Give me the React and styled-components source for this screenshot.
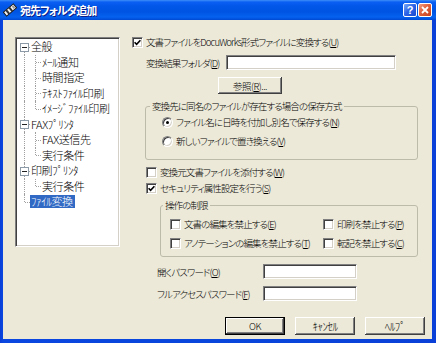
import React from "react"
import styled, { createGlobalStyle } from "styled-components"

const UI_FONT = `"Noto Sans CJK JP", "Noto Sans", "Liberation Sans", sans-serif`

const GlobalStyle = createGlobalStyle`
  html, body {
    margin: 0;
    padding: 0;
    background: #ffffff;
  }
  body {
    font-family: ${UI_FONT};
    font-feature-settings: "palt";
  }
  * {
    box-sizing: border-box;
  }
`;

const Window = styled.div`
    width: 436px;
    height: 343px;
    display: flex;
    flex-direction: column;
    background: linear-gradient(90deg, #0a3fd6 0, #0a46e0 3px, #0846dc 50%, #0a40d8 100%);
    overflow: hidden;
`;

const TitleBar = styled.div`
    height: 20px;
    flex: none;
    display: flex;
    align-items: center;
    padding: 0 4px 0 3px;
    background: linear-gradient(180deg, #3d8ef7 0, #0b60f3 2px, #0256e8 6px, #0054e3 12px, #0662f0 17px, #0049d2 20px);
`;

const TitleIcon = styled.svg`
    flex: none;
    margin-right: 3px;
`;

const TitleText = styled.span`
    flex: 1;
    color: #ffffff;
    font-weight: bold;
    font-size: 11px;
    letter-spacing: -1px;
    line-height: 13px;
    text-shadow: 1px 1px 0 #0b1f8a;
    white-space: nowrap;
`;

const CaptionButton = styled.span`
    width: 14px;
    height: 14px;
    margin-left: 1px;
    display: flex;
    align-items: center;
    justify-content: center;
    border: 1px solid #ffffff;
    border-radius: 2px;
    color: #ffffff;
    font-family: "Liberation Sans", sans-serif;
    font-weight: bold;
    font-size: 11px;
    line-height: 12px;
    background: ${p => p.$close
        ? "linear-gradient(135deg, #f0a086 0%, #e0603c 45%, #c8401c 100%)"
        : "linear-gradient(135deg, #7aa8f8 0%, #2c62e6 50%, #1a48d0 100%)"};
`;

const Client = styled.div`
    flex: 1;
    margin: 0 4px 4px 3px;
    background: #ece9d8;
    display: grid;
    grid-template-columns: 105px 1fr;
    column-gap: 12px;
    align-items: start;
    padding: 16px 0 0 12px;
`;

const Tree = styled.div`
    margin-top: 1px;
    height: 210px;
    background: #ffffff;
    border: 1px solid;
    border-color: #808080 #ffffff #ffffff #808080;
    box-shadow: inset 1px 1px #404040, inset -1px -1px #d4d0c8;
    padding: 1px 0 0 3px;
`;

const TreeRow = styled.div`
    display: flex;
    height: 15.5px;
`;

const Gutter = styled.span`
    position: relative;
    flex: none;
    width: 11px;
    &::before {
        content: "";
        position: absolute;
        left: 5px;
        top: ${p => p.$v === "bottom" ? "50%" : "0"};
        bottom: ${p => p.$v === "top" ? "50%" : "0"};
        border-left: 1px dotted #a0a0a0;
    }
    &::after {
        content: "";
        position: absolute;
        left: 6px;
        right: 0;
        top: 50%;
        border-top: 1px dotted #a0a0a0;
        display: ${p => p.$h ? "block" : "none"};
    }
`;

const Expander = styled.span`
    position: absolute;
    z-index: 1;
    left: 1px;
    top: calc(50% - 4px);
    width: 9px;
    height: 9px;
    border: 1px solid #8c9aa8;
    background: #ffffff;
    &::before {
        content: "";
        position: absolute;
        left: 1px;
        top: 3px;
        width: 5px;
        height: 1px;
        background: #222222;
    }
`;

const TreeLabel = styled.span`
    align-self: center;
    height: 13px;
    line-height: 13px;
    padding: 0 2px 0 1px;
    font-size: 11px;
    font-weight: 300;
    letter-spacing: -0.4px;
    white-space: nowrap;
    background: ${p => p.$selected ? "#316ac5" : "transparent"};
    color: ${p => p.$selected ? "#ffffff" : "#000000"};
`;

const Panel = styled.div`
    display: flex;
    flex-direction: column;
    align-items: flex-start;
    font-size: 9.5px;
    font-weight: 300;
    letter-spacing: -0.9px;
    color: #000000;
`;

const CheckRow = styled.label`
    display: flex;
    align-items: center;
    gap: 3px;
    height: 13px;
    line-height: 13px;
    margin: ${p => p.$top || 0}px 0 0 ${p => p.$indent || 0}px;
    white-space: nowrap;
`;

const Box = styled.span`
    flex: none;
    width: 11px;
    height: 11px;
    display: flex;
    align-items: center;
    justify-content: center;
    background: #ffffff;
    border: 1px solid;
    border-color: #808080 #ffffff #ffffff #808080;
    box-shadow: inset 1px 1px #404040, inset -1px -1px #d4d0c8;
`;

const RadioDot = styled.span`
    flex: none;
    width: 11px;
    height: 11px;
    border-radius: 50%;
    display: flex;
    align-items: center;
    justify-content: center;
    background: #ffffff;
    border: 1px solid;
    border-color: #808080 #ffffff #ffffff #808080;
    box-shadow: inset 1px 1px #404040, inset -1px -1px #d4d0c8;
    &::after {
        content: "";
        width: 3px;
        height: 3px;
        border-radius: 50%;
        background: #000000;
        display: ${p => p.$on ? "block" : "none"};
    }
`;

const FieldRow = styled.div`
    display: flex;
    align-items: center;
    height: 15px;
    margin: ${p => p.$top || 0}px 0 0 ${p => p.$indent || 0}px;
    white-space: nowrap;
`;

const FieldLabel = styled.span`
    flex: none;
    width: ${p => p.$w}px;
`;

const TextBox = styled.div`
    flex: none;
    width: ${p => p.$w}px;
    height: 15px;
    background: #ffffff;
    border: 1px solid;
    border-color: #808080 #ffffff #ffffff #808080;
    box-shadow: inset 1px 1px #404040, inset -1px -1px #d4d0c8;
`;

const Button = styled.button`
    width: ${p => p.$w}px;
    height: ${p => p.$h}px;
    margin: ${p => p.$top || 0}px 0 0 ${p => p.$indent || 0}px;
    padding: 0;
    font-family: ${UI_FONT};
    font-size: ${p => p.$size || 9.5}px;
    font-weight: 300;
    letter-spacing: -0.5px;
    color: #000000;
    background: #ece9d8;
    border: ${p => p.$default ? "1px solid #000000" : "none"};
    box-shadow: inset -1px -1px #404040, inset 1px 1px #ffffff, inset -2px -2px #808080;
`;

const ButtonRow = styled.div`
    display: flex;
    gap: 10px;
    margin: 16px 0 0 93px;
`;

const Group = styled.fieldset`
    margin: ${p => p.$top}px 0 0 ${p => p.$indent}px;
    width: ${p => p.$w}px;
    height: ${p => p.$h}px;
    min-width: 0;
    padding: 0;
    border: 1px solid #bcbaa9;
    border-radius: 3px;
`;

const GroupTitle = styled.legend`
    margin-left: ${p => p.$offset}px;
    padding: 0 2px;
    height: 13px;
    line-height: 13px;
    white-space: nowrap;
`;

const RadioList = styled.div`
    display: flex;
    flex-direction: column;
    gap: 6px;
    padding: 3px 0 0 16px;
`;

const CheckGrid = styled.div`
    display: grid;
    grid-template-columns: 153px auto;
    row-gap: 6px;
    padding: 6px 0 0 9px;
`;

const Key = ({ k }) => <>(<u>{k}</u>)</>

const Check = ({ checked }) => (
    <Box>
        {checked && (
            <svg width="7" height="7" viewBox="0 0 7 7">
                <path d="M0.6 3.2 L2.6 5.3 L6.4 1.2" fill="none" stroke="#000" strokeWidth="1.6" />
            </svg>
        )}
    </Box>
)

const treeRows = [
    { label: "全般", cells: [{ v: "bottom", h: true, exp: true }] },
    { label: "ﾒｰﾙ通知", cells: [{ v: "full" }, { v: "full", h: true }] },
    { label: "時間指定", cells: [{ v: "full" }, { v: "full", h: true }] },
    { label: "ﾃｷｽﾄﾌｧｲﾙ印刷", cells: [{ v: "full" }, { v: "full", h: true }] },
    { label: "ｲﾒｰｼﾞﾌｧｲﾙ印刷", cells: [{ v: "full" }, { v: "top", h: true }] },
    { label: "FAXﾌﾟﾘﾝﾀ", cells: [{ v: "full", h: true, exp: true }] },
    { label: "FAX送信先", cells: [{ v: "full" }, { v: "full", h: true }] },
    { label: "実行条件", cells: [{ v: "full" }, { v: "top", h: true }] },
    { label: "印刷ﾌﾟﾘﾝﾀ", cells: [{ v: "full", h: true, exp: true }] },
    { label: "実行条件", cells: [{ v: "full" }, { v: "top", h: true }] },
    { label: "ﾌｧｲﾙ変換", cells: [{ v: "top", h: true }], selected: true },
]

function App() {
    return (
        <>
            <GlobalStyle />
            <Window>
                <TitleBar>
                    <TitleIcon width="14" height="14" viewBox="0 0 14 14">
                        <g transform="rotate(-40 7 7)">
                            <rect x="0.5" y="4.5" width="13" height="5" fill="#f4f4f4" stroke="#1a1a1a" strokeWidth="1" />
                            <rect x="3" y="4.5" width="2" height="5" fill="#333" />
                            <rect x="7" y="4.5" width="2" height="5" fill="#333" />
                            <rect x="10.5" y="5.5" width="2" height="3" fill="#999" />
                        </g>
                    </TitleIcon>
                    <TitleText>宛先フォルダ追加</TitleText>
                    <CaptionButton>?</CaptionButton>
                    <CaptionButton $close>
                        <svg width="8" height="8" viewBox="0 0 8 8">
                            <path d="M1 1 L7 7 M7 1 L1 7" stroke="#fff" strokeWidth="1.8" />
                        </svg>
                    </CaptionButton>
                </TitleBar>

                <Client>
                    <Tree>
                        {treeRows.map((row, i) => (
                            <TreeRow key={i}>
                                {row.cells.map((c, j) => (
                                    <Gutter key={j} $v={c.v} $h={c.h}>
                                        {c.exp && <Expander />}
                                    </Gutter>
                                ))}
                                <TreeLabel $selected={row.selected}>{row.label}</TreeLabel>
                            </TreeRow>
                        ))}
                    </Tree>

                    <Panel>
                        <CheckRow>
                            <Check checked />
                            <span>文書ファイルをDocuWorks形式ファイルに変換する<Key k="U" /></span>
                        </CheckRow>

                        <FieldRow $top={6} $indent={14}>
                            <FieldLabel $w={80}>変換結果フォルダ<Key k="D" /></FieldLabel>
                            <TextBox $w={170} />
                        </FieldRow>

                        <Button $w={64} $h={17} $top={7} $indent={86}>参照<Key k="R" />...</Button>

                        <Group $top={6} $indent={13} $w={273} $h={60}>
                            <GroupTitle $offset={4}>変換先に同名のファイルが存在する場合の保存方式</GroupTitle>
                            <RadioList>
                                <CheckRow>
                                    <RadioDot $on />
                                    <span>ファイル名に日時を付加し別名で保存する<Key k="N" /></span>
                                </CheckRow>
                                <CheckRow>
                                    <RadioDot />
                                    <span>新しいファイルで置き換える<Key k="V" /></span>
                                </CheckRow>
                            </RadioList>
                        </Group>

                        <CheckRow $top={6} $indent={14}>
                            <Check />
                            <span>変換元文書ファイルを添付する<Key k="W" /></span>
                        </CheckRow>
                        <CheckRow $top={3} $indent={14}>
                            <Check checked />
                            <span>セキュリティ属性設定を行う<Key k="S" /></span>
                        </CheckRow>

                        <Group $top={4} $indent={28} $w={258} $h={58}>
                            <GroupTitle $offset={2}>操作の制限</GroupTitle>
                            <CheckGrid>
                                <CheckRow>
                                    <Check />
                                    <span>文書の編集を禁止する<Key k="E" /></span>
                                </CheckRow>
                                <CheckRow>
                                    <Check />
                                    <span>印刷を禁止する<Key k="P" /></span>
                                </CheckRow>
                                <CheckRow>
                                    <Check />
                                    <span>アノテーションの編集を禁止する<Key k="T" /></span>
                                </CheckRow>
                                <CheckRow>
                                    <Check />
                                    <span>転記を禁止する<Key k="C" /></span>
                                </CheckRow>
                            </CheckGrid>
                        </Group>

                        <FieldRow $top={7} $indent={25}>
                            <FieldLabel $w={106}>開くパスワード<Key k="O" /></FieldLabel>
                            <TextBox $w={94} />
                        </FieldRow>
                        <FieldRow $top={7} $indent={25}>
                            <FieldLabel $w={106}>フルアクセスパスワード<Key k="F" /></FieldLabel>
                            <TextBox $w={94} />
                        </FieldRow>

                        <ButtonRow>
                            <Button $w={60} $h={18} $default>OK</Button>
                            <Button $w={60} $h={18} $size={11}>ｷｬﾝｾﾙ</Button>
                            <Button $w={60} $h={18} $size={11}>ﾍﾙﾌﾟ</Button>
                        </ButtonRow>
                    </Panel>
                </Client>
            </Window>
        </>
    )
}

export default App
